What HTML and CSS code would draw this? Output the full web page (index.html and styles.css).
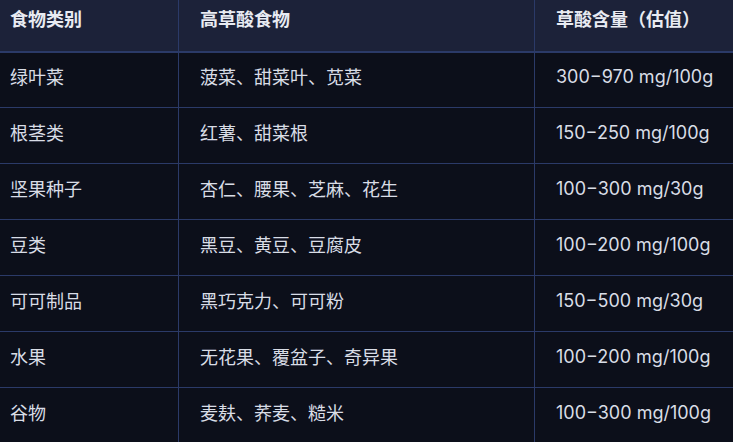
FILE: index.html
```html
<!DOCTYPE html>
<html lang="zh">
<head>
<meta charset="utf-8">
<link rel="stylesheet" href="styles.css">
</head>
<body>
<div class="wrap">
<table class="tbl">
  <thead>
    <tr><th class="c1">食物类别</th><th class="c2">高草酸食物</th><th class="c3">草酸含量（估值）</th></tr>
  </thead>
  <tbody>
    <tr><td>绿叶菜</td><td>菠菜、甜菜叶、苋菜</td><td>300−970 mg/100g</td></tr>
    <tr><td>根茎类</td><td>红薯、甜菜根</td><td>150−250 mg/100g</td></tr>
    <tr><td>坚果种子</td><td>杏仁、腰果、芝麻、花生</td><td>100−300 mg/30g</td></tr>
    <tr><td>豆类</td><td>黑豆、黄豆、豆腐皮</td><td>100−200 mg/100g</td></tr>
    <tr><td>可可制品</td><td>黑巧克力、可可粉</td><td>150−500 mg/30g</td></tr>
    <tr><td>水果</td><td>无花果、覆盆子、奇异果</td><td>100−200 mg/100g</td></tr>
    <tr><td>谷物</td><td>麦麸、荞麦、糙米</td><td>100−300 mg/100g</td></tr>
  </tbody>
</table>
</div>
</body>
</html>
```
FILE: styles.css
```css
html, body {
  margin: 0;
  padding: 0;
  background: #0c0f1a;
  overflow: hidden;
}
.wrap {
  width: 733px;
  height: 442px;
  overflow: hidden;
}
.tbl {
  border-collapse: collapse;
  margin-left: -12px;
  margin-top: -5px;
  width: 757px;
  table-layout: fixed;
  font-family: Inter, "Noto Sans CJK SC", sans-serif;
  font-size: 18px;
  color: #d9dde6;
}
.tbl th, .tbl td {
  box-sizing: border-box;
  text-align: left;
  padding: 0 21px;
  border: 1px solid #2b3a68;
  white-space: nowrap;
}
.tbl th.c1 { width: 190px; }
.tbl th.c2 { width: 356px; }
.tbl th.c3 { width: 211px; }
.tbl th {
  background: #1c2239;
  color: #e8ebf2;
  font-weight: 700;
  height: 56px;
  padding-bottom: 10px;
  border-bottom-width: 2px;
}
.tbl td {
  height: 56px;
  padding-bottom: 7px;
  background: #0c0f1a;
}
```
